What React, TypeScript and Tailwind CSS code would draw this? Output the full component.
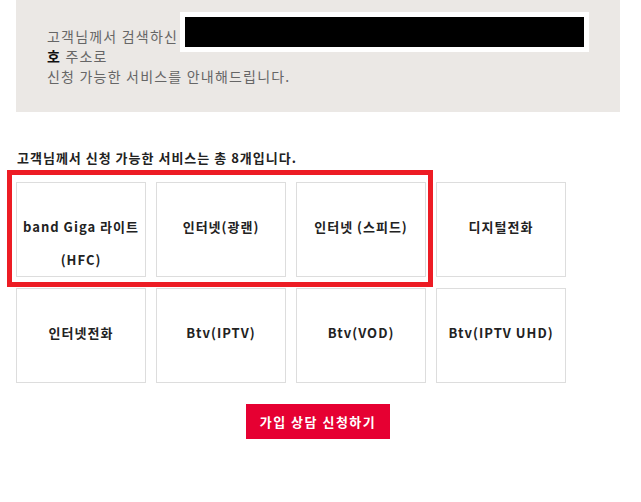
import React from 'react';

const services: string[][] = [
  ['band Giga 라이트', '(HFC)'],
  ['인터넷(광랜)'],
  ['인터넷 (스피드)'],
  ['디지털전화'],
  ['인터넷전화'],
  ['Btv(IPTV)'],
  ['Btv(VOD)'],
  ['Btv(IPTV UHD)'],
];

const ServiceCard: React.FC<{ lines: string[] }> = ({ lines }) => (
  <div className="h-[95px] border border-[#dddddd] bg-white pt-[27px] text-center text-[13px] font-bold leading-[33px] tracking-[1px] text-[#222222]">
    {lines.map((line) => (
      <div key={line}>{line}</div>
    ))}
  </div>
);

export default function App() {
  return (
    <div
      className="relative h-[502px] w-[641px] bg-white"
      style={{ fontFamily: '"Noto Sans CJK KR", "Liberation Sans", sans-serif' }}
    >
      <div className="ml-[16px] w-[604px]">
        {/* search summary */}
        <div className="h-[112px] bg-[#ebe8e5] pl-[31px] pt-[12px] text-[14px] leading-[20px] tracking-[1.2px] text-[#666666]">
          <div className="-mb-[6px] flex items-start">
            <span className="w-[133px] pt-[14px]">고객님께서 검색하신</span>
            <div className="h-[40px] w-[409px] bg-white p-[5px]">
              <div className="h-full w-full bg-black" />
            </div>
          </div>
          <div>
            <span className="font-bold text-[#111111]">호</span> 주소로
          </div>
          <div>신청 가능한 서비스를 안내해드립니다.</div>
        </div>

        <h2 className="mt-[36px] pl-[1px] text-[13px] font-bold leading-[20px] tracking-[1px] text-[#222222]">
          고객님께서 신청 가능한 서비스는 총 8개입니다.
        </h2>

        <div className="mt-[14px] grid w-[550px] grid-cols-4 gap-x-[10px] gap-y-[11px]">
          {services.map((s) => (
            <ServiceCard key={s.join()} lines={s} />
          ))}
        </div>

        <div className="mt-[21px] flex justify-center">
          <button className="h-[35px] w-[144px] bg-[#e60032] text-[13px] font-bold tracking-[1.5px] text-white">
            가입 상담 신청하기
          </button>
        </div>
      </div>

      {/* highlight outline */}
      <div className="pointer-events-none absolute left-[7px] top-[170px] h-[117px] w-[426px] border-[5px] border-[#ed1c24]" />
    </div>
  );
}
